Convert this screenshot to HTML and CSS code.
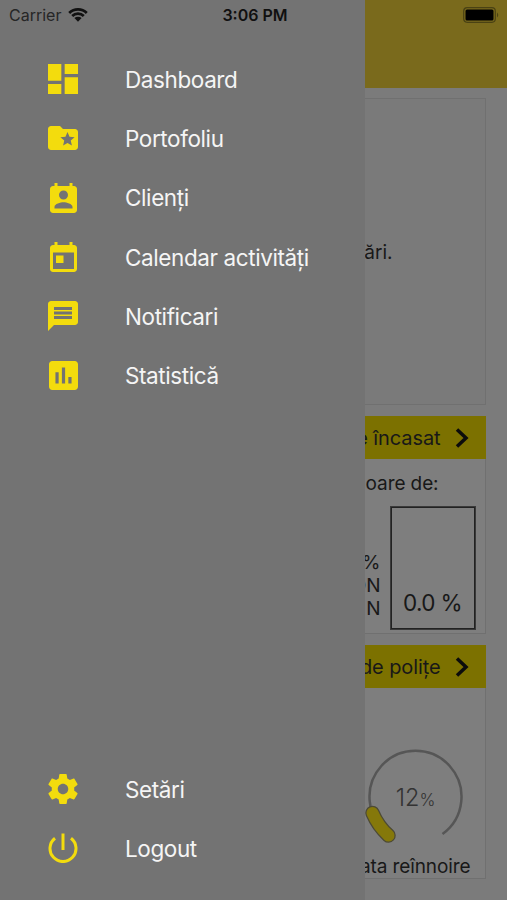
FILE: index.html
```html
<!DOCTYPE html>
<html lang="ro">
<head>
<meta charset="utf-8">
<title>Dashboard</title>
<link rel="stylesheet" href="styles.css">
</head>
<body>
<div class="screen">
  <header class="header"></header>
  <main class="cards">
    <section class="card card-message"><p>ări.</p></section>
    <section class="card card-paid">
      <div class="bar"><span>e încasat</span>
        <svg class="chev" viewBox="0 0 14 20"><path d="M2 1.500 L11 10 L2 18.500"/></svg></div>
      <div class="paid-body">
        <p class="worth">loare de:</p>
        <div class="paid-row">
          <div class="amounts"><span>%</span><span>ON</span><span>N</span></div>
          <div class="box"><span>0.0 %</span></div>
        </div>
      </div>
    </section>
    <section class="card card-policies">
      <div class="bar"><span>de polițe</span>
        <svg class="chev" viewBox="0 0 14 20"><path d="M2 1.500 L11 10 L2 18.500"/></svg></div>
      <div class="gauge">
        <svg viewBox="0 0 110 110"><path class="track" d="M27.500 92 A46 46 0 1 1 81.500 92"/><path class="cap-edge" d="M11.500 71 Q17 84 27.500 93.500"/><path class="cap" d="M11.500 71 Q17 84 27.500 93.500"/></svg>
        <div class="percent"><span>12</span><small>%</small></div>
      </div>
      <p class="renew">ata reînnoire</p>
    </section>
  </main>
</div>
<nav class="drawer">
  <ul>
    <li><svg width="30" height="30" viewBox="3 3 18 18"><path d="M3 13h8V3H3v10zm0 8h8v-6H3v6zm10 0h8V11h-8v10zm0-18v6h8V3h-8z"/></svg><span>Dashboard</span></li>
    <li><svg width="30" height="24" viewBox="2 4 20 16"><path d="M20 6h-8l-2-2H4c-1.100 0-2 .9-2 2v12c0 1.100.9 2 2 2h16c1.100 0 2-.9 2-2V8c0-1.100-.9-2-2-2zm-2.060 11L15 15.280 12.060 17l.78-3.330-2.590-2.240 3.410-.29L15 8l1.340 3.140 3.410.29-2.590 2.240.78 3.330z"/></svg><span>Portofoliu</span></li>
    <li><svg width="27" height="30" viewBox="3 1 18 20"><path d="M19 3h-1V1h-2v2H8V1H6v2H5c-1.110 0-2 .9-2 2v14c0 1.100.89 2 2 2h14c1.100 0 2-.9 2-2V5c0-1.100-.9-2-2-2zm-7 3c1.660 0 3 1.340 3 3s-1.340 3-3 3-3-1.340-3-3 1.340-3 3-3zm6 12H6v-1c0-2 4-3.100 6-3.100s6 1.100 6 3.100v1z"/></svg><span>Clienți</span></li>
    <li><svg width="27" height="30" viewBox="3 1 18 20"><path d="M19 3h-1V1h-2v2H8V1H6v2H5c-1.110 0-2 .9-2 2v14c0 1.100.89 2 2 2h14c1.100 0 2-.9 2-2V5c0-1.100-.9-2-2-2zm0 16H5V8h14v11zM7 10h5v5H7z"/></svg><span>Calendar activități</span></li>
    <li><svg width="30" height="30" viewBox="2 2 20 20"><path d="M20 2H4c-1.100 0-2 .9-2 2v18l4-4h14c1.100 0 2-.9 2-2V4c0-1.100-.9-2-2-2zM18 14H6v-2h12v2zm0-3H6V9h12v2zm0-3H6V6h12v2z"/></svg><span>Notificari</span></li>
    <li><svg width="29" height="29" viewBox="3 3 18 18"><path d="M19 3H5c-1.100 0-2 .9-2 2v14c0 1.100.9 2 2 2h14c1.100 0 2-.9 2-2V5c0-1.100-.9-2-2-2zM9 17H7v-7h2v7zm4 0h-2V7h2v10zm4 0h-2v-4h2v4z"/></svg><span>Statistică</span></li>
  </ul>
  <ul>
    <li><svg width="30" height="30" viewBox="2 2 20 20"><path d="M19.430 12.980c.04-.32.07-.64.07-.98s-.03-.66-.07-.98l2.110-1.650c.19-.15.24-.42.12-.64l-2-3.460c-.12-.22-.39-.3-.61-.22l-2.490 1c-.52-.4-1.080-.73-1.690-.98l-.38-2.650C14.460 2.180 14.250 2 14 2h-4c-.25 0-.46.18-.49.42l-.38 2.650c-.61.25-1.170.59-1.690.98l-2.490-1c-.23-.09-.49 0-.61.22l-2 3.460c-.13.22-.07.49.12.64l2.110 1.650c-.04.32-.07.65-.07.98s.03.66.07.98l-2.110 1.650c-.19.15-.24.42-.12.64l2 3.460c.12.22.39.3.61.22l2.490-1c.52.4 1.080.73 1.690.98l.38 2.650c.03.24.24.42.49.42h4c.25 0 .46-.18.49-.42l.38-2.650c.61-.25 1.170-.59 1.690-.98l2.490 1c.23.09.49 0 .61-.22l2-3.460c.12-.22.07-.49-.12-.64l-2.110-1.650zM12 15.500c-1.930 0-3.500-1.570-3.500-3.500s1.570-3.500 3.500-3.500 3.500 1.570 3.500 3.500-1.570 3.500-3.500 3.500z"/></svg><span>Setări</span></li>
    <li><svg width="30" height="30" viewBox="0 0 30 30"><path class="line" d="M15 .5V17M7 5.300A13 13 0 1 0 23 5.300"/></svg><span>Logout</span></li>
  </ul>
</nav>
<div class="status">
  <div class="carrier"><span>Carrier</span>
    <svg width="20" height="14" viewBox="0 0 20 14"><path d="M1.200 5A12.600 12.600 0 0 1 18.800 5M4.200 8A8.300 8.300 0 0 1 15.800 8"/><path class="dot" d="M6.400 10.100A5.200 5.200 0 0 1 13.600 10.100L10 13.700Z"/></svg></div>
  <span class="time">3:06 PM</span>
  <svg class="battery" width="37" height="16" viewBox="0 0 37 16"><rect class="shell" x=".7" y=".7" width="31.600" height="14.600" rx="3.500"/><rect x="2.500" y="2.500" width="28" height="11" rx="1.500"/><path class="tip" d="M34 5.500Q36.500 8 34 10.500Z"/></svg>
</div>
</body>
</html>
```
FILE: styles.css
```css
* { box-sizing: border-box; margin: 0; padding: 0; }
body { width: 507px; height: 900px; overflow: hidden; position: relative; background: #7b7b7b; font-family: Inter, "Liberation Sans", sans-serif; color: #181818; }
.screen { height: 900px; overflow: hidden; }
.header { height: 88px; background: #7a6a1c; }
.cards { display: flex; flex-direction: column; gap: 11px; padding: 10px 21.500px 0; }
.card { border: 1px solid #707070; background: #7e7e7e; }
.card-message { height: 307px; display: flex; align-items: center; justify-content: flex-end; padding: 2px 92px 0 0; font-size: 19px; background: #7a7a7a; }
.card-paid { height: 218px; }
.card-policies { height: 234px; }
.bar { height: 43px; margin: -1px -1px 0; background: #7c7100; display: flex; align-items: center; justify-content: flex-end; gap: 14px; padding-right: 17px; font-size: 20px; letter-spacing: -.1px; white-space: nowrap; }
.bar svg { width: 14px; height: 20px; fill: none; stroke: #0c0c0c; stroke-width: 3.500; }
.paid-body { padding: 13px 10px 0; }
.worth { text-align: right; padding-right: 36px; font-size: 19px; line-height: 24px; letter-spacing: -.1px; }
.paid-row { display: flex; justify-content: flex-end; gap: 10px; margin-top: 11px; }
.amounts { display: flex; flex-direction: column; justify-content: flex-end; align-items: flex-end; padding-bottom: 9px; font-size: 19px; line-height: 23px; }
.box { width: 84px; height: 122px; border: 1.500px solid #222; outline: .5px solid #3a3a3a; display: flex; align-items: flex-end; justify-content: center; padding-bottom: 10px; font-size: 22.500px; line-height: 30px; letter-spacing: -.6px; white-space: nowrap; }
.gauge { position: relative; width: 110px; height: 110px; margin: 54px 14px 0 auto; display: flex; align-items: center; justify-content: center; }
.gauge svg { position: absolute; inset: 0; fill: none; }
.track { stroke: #565656; stroke-width: 2.500; }
.cap-edge { stroke: #4d4a35; stroke-width: 14.500; stroke-linecap: round; }
.cap { stroke: #85780a; stroke-width: 12; stroke-linecap: round; }
.percent { color: #333; font-weight: 300; font-size: 23.500px; position: relative; }
.percent small { font-size: 17px; }
.renew { text-align: right; padding: 3px 14px 0 0; font-size: 19px; line-height: 24px; letter-spacing: -.1px; }
.drawer { position: absolute; left: 0; top: 0; width: 365px; height: 900px; padding: 49.500px 0 22px; background: #737373; display: flex; flex-direction: column; justify-content: space-between; }
.drawer ul { list-style: none; }
.drawer li { height: 59.300px; display: grid; grid-template-columns: 126px 1fr; align-items: center; color: #f5f5f5; font-size: 22.500px; letter-spacing: -.4px; white-space: nowrap; }
.drawer li span { margin-left: -1px; }
.drawer svg { justify-self: center; fill: #f3dc0d; }
.drawer .line { fill: none; stroke: #f3dc0d; stroke-width: 3; }
.status { position: absolute; left: 0; top: 0; width: 507px; height: 30px; padding: 0 7px 0 9px; display: grid; grid-template-columns: 1fr auto 1fr; align-items: center; color: #101010; font-size: 16px; }
.carrier { display: flex; align-items: center; gap: 7px; color: #262626; }
.carrier svg { fill: none; stroke: #111; stroke-width: 2.700; }
.carrier .dot { fill: #111; stroke: none; }
.time { font-weight: 600; padding-left: 1px; }
.battery { justify-self: end; fill: #000; }
.shell { fill: none; stroke: #4a4214; stroke-width: 1.200; }
.tip { fill: #4a4214; }
```
